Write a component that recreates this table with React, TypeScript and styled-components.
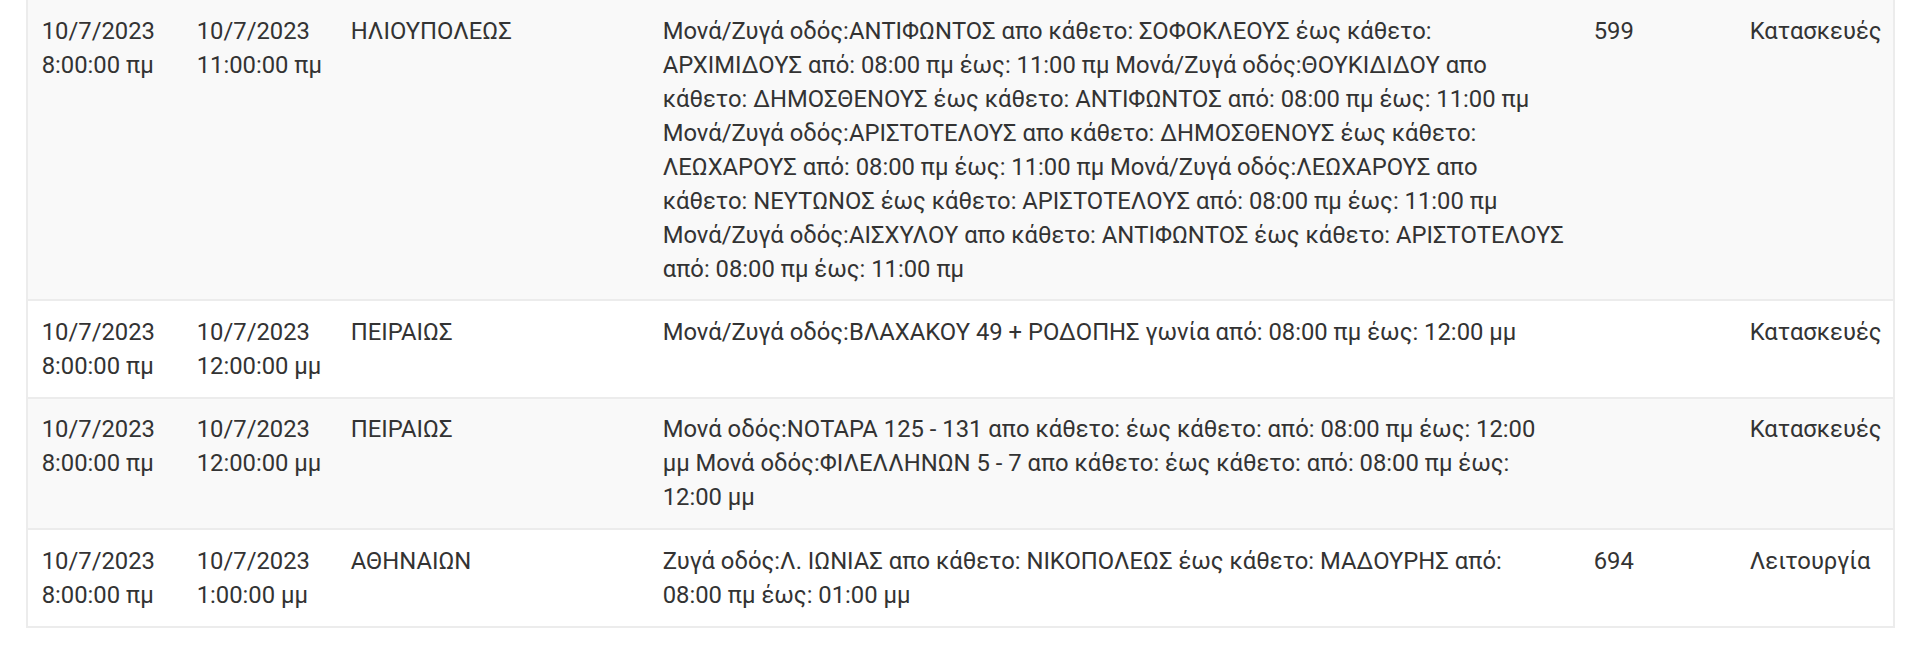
import React from "react";
import styled, { createGlobalStyle } from "styled-components";

const GlobalStyle = createGlobalStyle`
  body {
    margin: 0;
    background: #fff;
    font-family: Roboto, "Liberation Sans", Arial, sans-serif;
    color: #333;
  }
`;

const Page = styled.div`
  padding: 0 25px 0 26px;
`;

const Table = styled.table`
  width: 100%;
  table-layout: fixed;
  border-collapse: collapse;
  border: 2px solid #ececec;
  border-top: none;
  font-size: 23.8px;
  line-height: 34px;
`;

const Col = styled.col<{ $w: number }>`
  width: ${(p) => p.$w}px;
`;

const Row = styled.tr<{ $striped?: boolean }>`
  background: ${(p) => (p.$striped ? "#f9f9f9" : "#fff")};
  border-top: 2px solid #ececec;
  &:first-child {
    border-top: none;
  }
`;

const Cell = styled.td`
  padding: 13.7px;
  vertical-align: top;
  text-align: left;
`;

type Item = {
  from: string[];
  to: string[];
  area: string;
  desc: string;
  code: string;
  kind: string;
};

const widths = [156, 154, 312, 931, 156, 158];

const items: Item[] = [
  {
    from: ["10/7/2023", "8:00:00 πμ"],
    to: ["10/7/2023", "11:00:00 πμ"],
    area: "ΗΛΙΟΥΠΟΛΕΩΣ",
    desc:
      "Μονά/Ζυγά οδός:ΑΝΤΙΦΩΝΤΟΣ απο κάθετο: ΣΟΦΟΚΛΕΟΥΣ έως κάθετο: ΑΡΧΙΜΙΔΟΥΣ από: 08:00 πμ έως: 11:00 πμ Μονά/Ζυγά οδός:ΘΟΥΚΙΔΙΔΟΥ απο κάθετο: ΔΗΜΟΣΘΕΝΟΥΣ έως κάθετο: ΑΝΤΙΦΩΝΤΟΣ από: 08:00 πμ έως: 11:00 πμ Μονά/Ζυγά οδός:ΑΡΙΣΤΟΤΕΛΟΥΣ απο κάθετο: ΔΗΜΟΣΘΕΝΟΥΣ έως κάθετο: ΛΕΩΧΑΡΟΥΣ από: 08:00 πμ έως: 11:00 πμ Μονά/Ζυγά οδός:ΛΕΩΧΑΡΟΥΣ απο κάθετο: ΝΕΥΤΩΝΟΣ έως κάθετο: ΑΡΙΣΤΟΤΕΛΟΥΣ από: 08:00 πμ έως: 11:00 πμ Μονά/Ζυγά οδός:ΑΙΣΧΥΛΟΥ απο κάθετο: ΑΝΤΙΦΩΝΤΟΣ έως κάθετο: ΑΡΙΣΤΟΤΕΛΟΥΣ από: 08:00 πμ έως: 11:00 πμ",
    code: "599",
    kind: "Κατασκευές",
  },
  {
    from: ["10/7/2023", "8:00:00 πμ"],
    to: ["10/7/2023", "12:00:00 μμ"],
    area: "ΠΕΙΡΑΙΩΣ",
    desc: "Μονά/Ζυγά οδός:ΒΛΑΧΑΚΟΥ 49 + ΡΟΔΟΠΗΣ γωνία από: 08:00 πμ έως: 12:00 μμ",
    code: "",
    kind: "Κατασκευές",
  },
  {
    from: ["10/7/2023", "8:00:00 πμ"],
    to: ["10/7/2023", "12:00:00 μμ"],
    area: "ΠΕΙΡΑΙΩΣ",
    desc:
      "Μονά οδός:ΝΟΤΑΡΑ 125 - 131 απο κάθετο: έως κάθετο: από: 08:00 πμ έως: 12:00 μμ Μονά οδός:ΦΙΛΕΛΛΗΝΩΝ 5 - 7 απο κάθετο: έως κάθετο: από: 08:00 πμ έως: 12:00 μμ",
    code: "",
    kind: "Κατασκευές",
  },
  {
    from: ["10/7/2023", "8:00:00 πμ"],
    to: ["10/7/2023", "1:00:00 μμ"],
    area: "ΑΘΗΝΑΙΩΝ",
    desc: "Ζυγά οδός:Λ. ΙΩΝΙΑΣ απο κάθετο: ΝΙΚΟΠΟΛΕΩΣ έως κάθετο: ΜΑΔΟΥΡΗΣ από: 08:00 πμ έως: 01:00 μμ",
    code: "694",
    kind: "Λειτουργία",
  },
];

function DateCell({ parts }: { parts: string[] }) {
  return (
    <Cell>
      {parts[0]}
      <br />
      {parts[1]}
    </Cell>
  );
}

export default function App() {
  return (
    <Page>
      <GlobalStyle />
      <Table>
        <colgroup>
          {widths.map((w, i) => (
            <Col key={i} $w={w} />
          ))}
        </colgroup>
        <tbody>
          {items.map((it, i) => (
            <Row key={i} $striped={i % 2 === 0}>
              <DateCell parts={it.from} />
              <DateCell parts={it.to} />
              <Cell>{it.area}</Cell>
              <Cell>{it.desc}</Cell>
              <Cell>{it.code}</Cell>
              <Cell>{it.kind}</Cell>
            </Row>
          ))}
        </tbody>
      </Table>
    </Page>
  );
}
